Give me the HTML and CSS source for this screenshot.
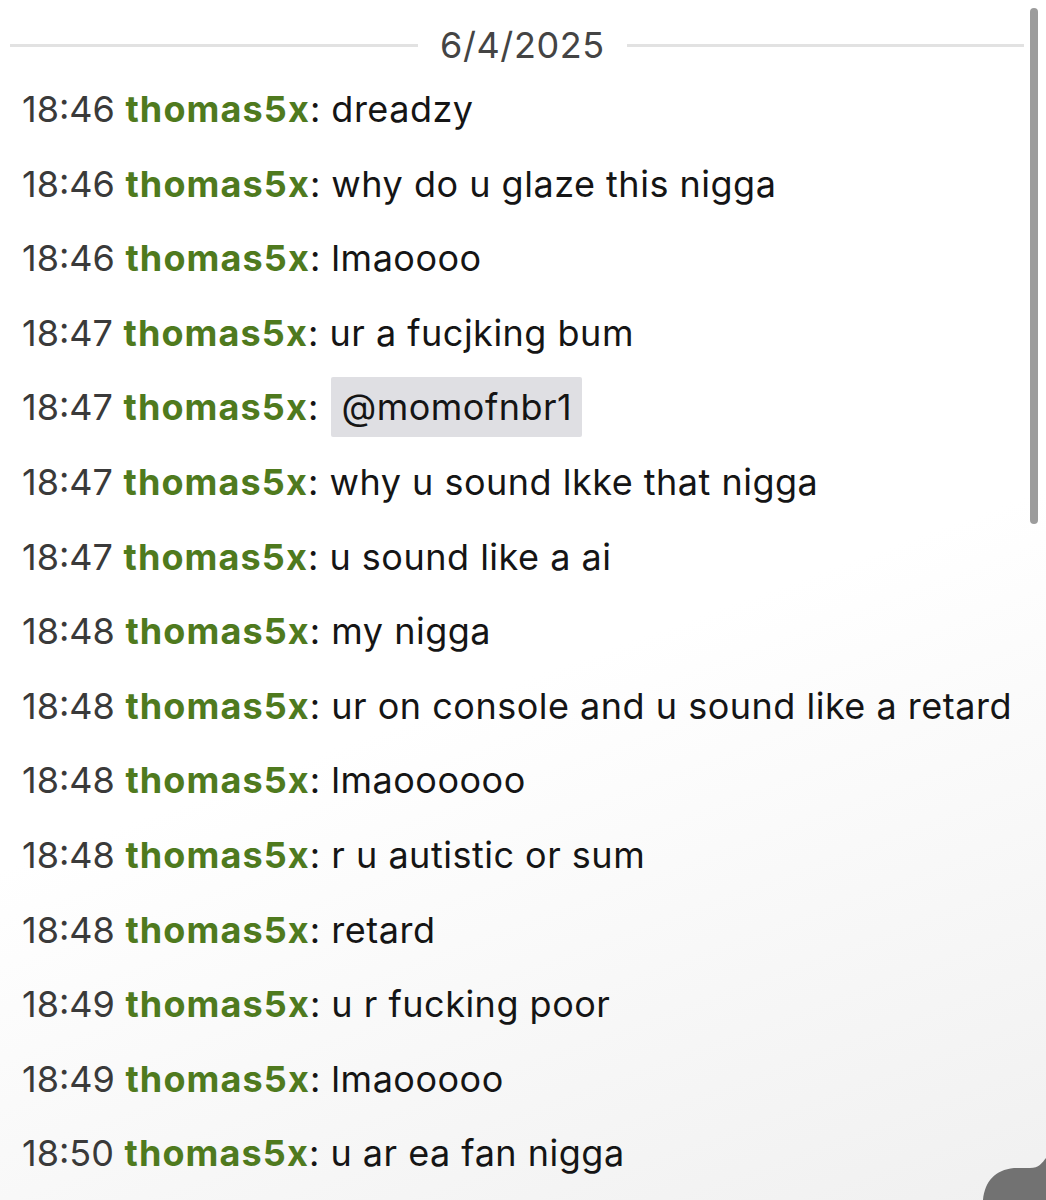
FILE: index.html
```html
<!DOCTYPE html>
<html>
<head>
<meta charset="utf-8">
<link rel="stylesheet" href="styles.css">
</head>
<body>
<div class="page">
  <div class="chat">
    <div class="date-sep"><span class="line line-left"></span><span class="date">6/4/2025</span><span class="line"></span></div>
    <div class="msg"><span class="time">18:46</span> <span class="user">thomas5x</span>: dreadzy</div>
    <div class="msg"><span class="time">18:46</span> <span class="user">thomas5x</span>: why do u glaze this nigga</div>
    <div class="msg"><span class="time">18:46</span> <span class="user">thomas5x</span>: lmaoooo</div>
    <div class="msg"><span class="time">18:47</span> <span class="user">thomas5x</span>: ur a fucjking bum</div>
    <div class="msg"><span class="time">18:47</span> <span class="user">thomas5x</span>: <span class="mention">@momofnbr1</span></div>
    <div class="msg"><span class="time">18:47</span> <span class="user">thomas5x</span>: why u sound lkke that nigga</div>
    <div class="msg"><span class="time">18:47</span> <span class="user">thomas5x</span>: u sound like a ai</div>
    <div class="msg"><span class="time">18:48</span> <span class="user">thomas5x</span>: my nigga</div>
    <div class="msg"><span class="time">18:48</span> <span class="user">thomas5x</span>: ur on console and u sound like a retard</div>
    <div class="msg"><span class="time">18:48</span> <span class="user">thomas5x</span>: lmaoooooo</div>
    <div class="msg"><span class="time">18:48</span> <span class="user">thomas5x</span>: r u autistic or sum</div>
    <div class="msg"><span class="time">18:48</span> <span class="user">thomas5x</span>: retard</div>
    <div class="msg"><span class="time">18:49</span> <span class="user">thomas5x</span>: u r fucking poor</div>
    <div class="msg"><span class="time">18:49</span> <span class="user">thomas5x</span>: lmaooooo</div>
    <div class="msg"><span class="time">18:50</span> <span class="user">thomas5x</span>: u ar ea fan nigga</div>
  </div>
  <div class="scrollbar"></div>
  <svg class="corner" width="66" height="50" viewBox="0 0 66 50"><path d="M3 50 C5 31 15 20 34 18 L50 18 C59 18 62 13 66 8 L66 50 Z" fill="#727272"/></svg>
</div>
</body>
</html>
```
FILE: styles.css
```css
html, body {
  margin: 0;
  padding: 0;
}
body {
  width: 1046px;
  height: 1200px;
  overflow: hidden;
  font-family: Inter, "Noto Sans", sans-serif;
}
.page {
  position: relative;
  width: 1046px;
  height: 1200px;
  background: linear-gradient(160deg, #ffffff 0%, #ffffff 55%, #f0f0f0 100%);
  overflow: hidden;
}
.chat {
  padding: 22px 0 0 22px;
  width: 1002px;
}
.date-sep {
  display: flex;
  align-items: center;
  gap: 22px;
  margin-left: -12px;
  height: 46px;
  margin-bottom: 4px;
}
.date-sep .line {
  flex: 1;
  height: 3px;
  background: #e2e2e2;
}
.date-sep .line-left {
  flex: 0 0 408px;
}
.date {
  font-size: 36px;
  color: #444;
  letter-spacing: 0.6px;
}
.msg {
  font-size: 36px;
  line-height: 74.6px;
  color: #151515;
  white-space: nowrap;
  letter-spacing: 0.5px;
}
.time {
  color: #3a3a3a;
  letter-spacing: 0;
}
.user {
  color: #4f7a1e;
  font-weight: 700;
  letter-spacing: 1.1px;
}
.mention {
  background: #dfdfe3;
  padding: 8px 10px;
  margin-left: 2px;
  border-radius: 2px;
}
.scrollbar {
  position: absolute;
  left: 1030px;
  top: 8px;
  width: 8px;
  height: 516px;
  border-radius: 4px;
  background: #9c9c9c;
}
.corner {
  position: absolute;
  left: 980px;
  top: 1150px;
}
```
